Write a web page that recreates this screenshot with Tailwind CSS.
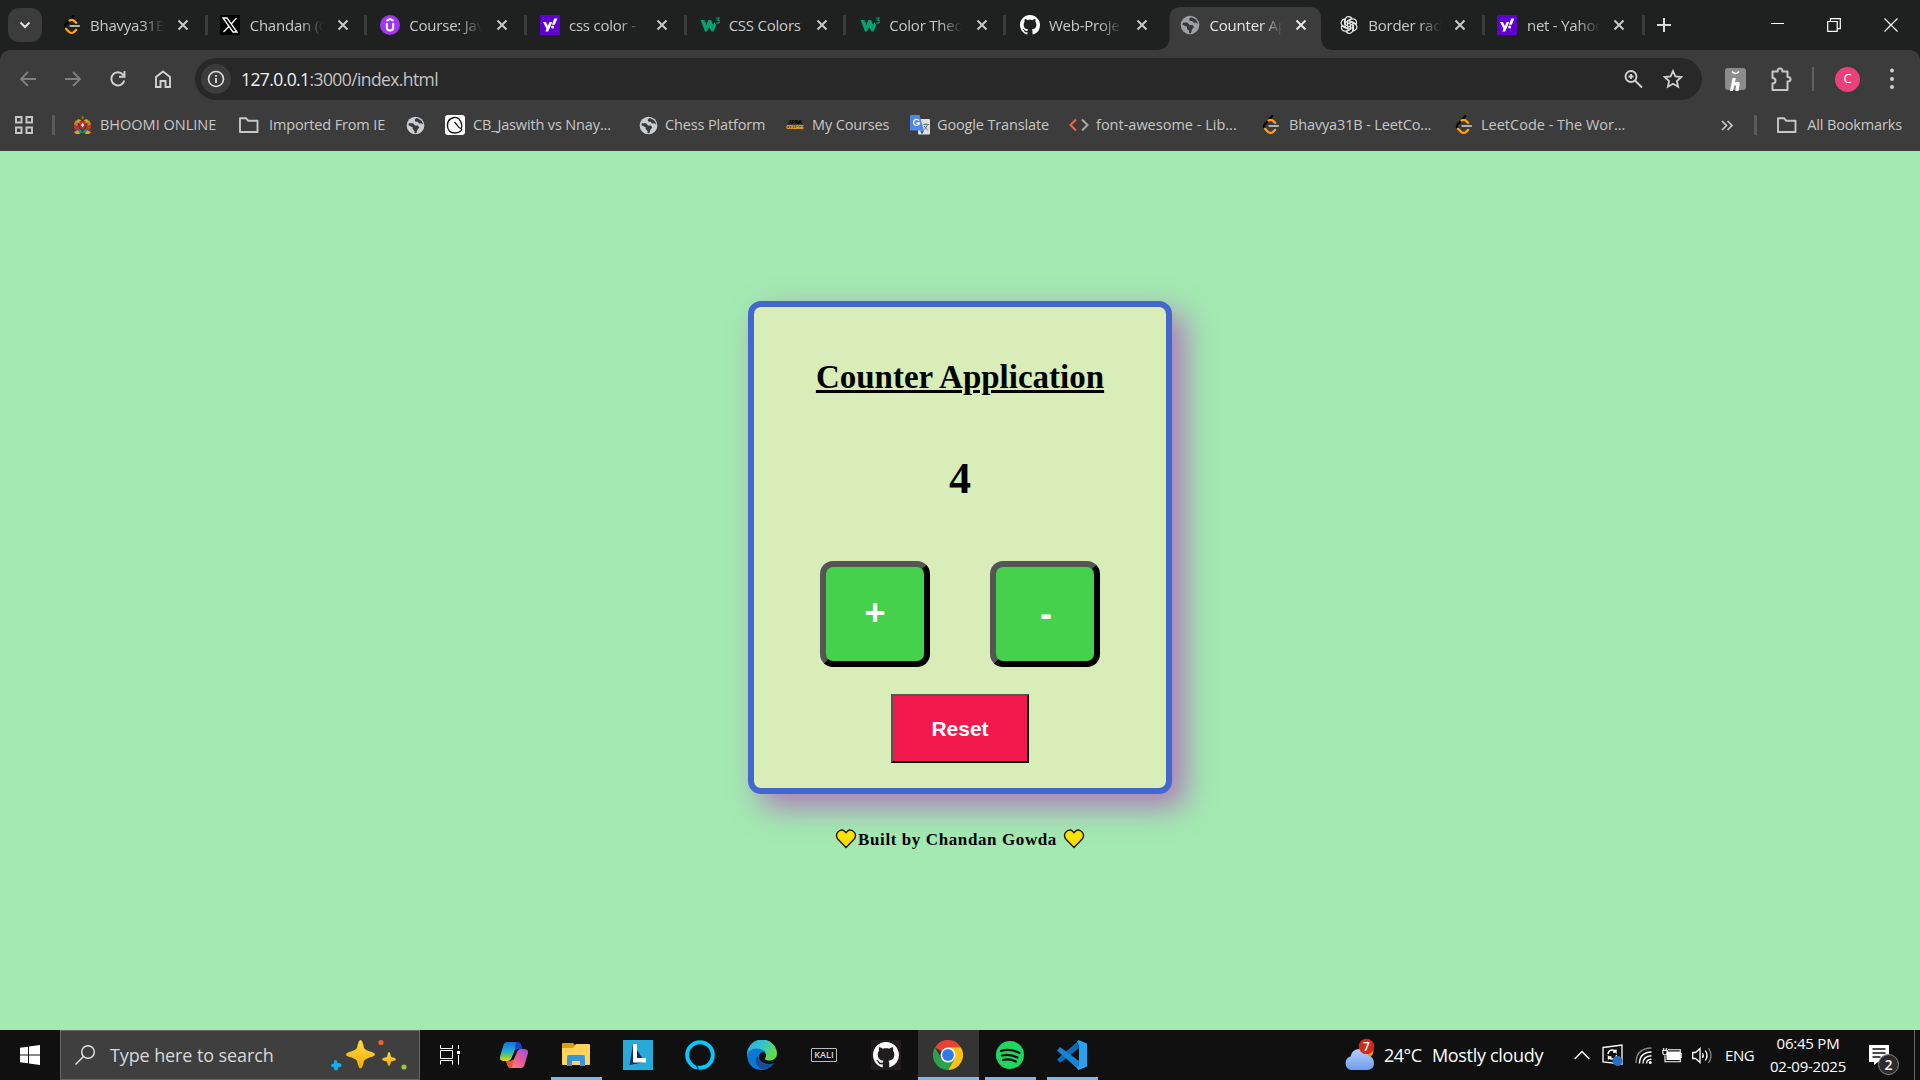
<!DOCTYPE html>
<html lang="en">
<head>
<meta charset="utf-8">
<title>Counter Application</title>
<script src="https://cdn.jsdelivr.net/npm/@tailwindcss/browser@4"></script>
</head>
<body class="w-[1920px] h-[1080px] overflow-hidden flex flex-col bg-[#a3e9b1] font-['Open_Sans','Noto_Sans',sans-serif]">
<svg class="hidden">
  <defs>
    <symbol id="x" viewBox="0 0 12 12"><path d="M1.500 1.500l9 9M10.500 1.500l-9 9" stroke="currentColor" stroke-width="2" fill="none"/></symbol>
    <symbol id="leet" viewBox="0 0 24 24"><path d="M13.500 1.400L4.600 11q-2.200 2.700 0 5" fill="none" stroke="#000" stroke-width="2.700" stroke-linecap="round"/><path d="M9 6.600q2.800-1.600 5.200.2l2.800 2.600M4.800 16.400l4 4.100q2.800 2 5.400 0l2.800-2.700" fill="none" stroke="#ffa116" stroke-width="2.700" stroke-linecap="round"/><path d="M10 13.200h10.500" stroke="#b3b3b3" stroke-width="2.500" stroke-linecap="round"/></symbol>
    <symbol id="yahoo" viewBox="0 0 20 20"><path d="M0 0h20v20H0z" fill="#5f01d1"/><path d="M3 7h3l1.800 4L9.500 7h2.800L8.200 16.500H5.400l1.100-2.700z" fill="#fff"/><path d="M14.200 3.500h3.200l-2.600 6.300H12z" fill="#fff"/><circle cx="12.600" cy="12" r="1.500" fill="#fff"/></symbol>
    <symbol id="w3" viewBox="0 0 20 20"><path d="M.5 5h4l2 5 1.600-5h3l2 5 1-2.500 2.400 2.500-3 6.500h-2L9.200 12 7 16.500H5z" fill="#04a070"/><path d="M16 3h3l-1.500 2q2 0 1.700 1.800t-3 1.200" fill="none" stroke="#04a070" stroke-width="1.100"/></symbol>
    <symbol id="globe" viewBox="0 0 20 20"><circle cx="10" cy="10" r="9.300" fill="currentColor"/><path d="M3 7.500h4.500l2 2.500h3l1.500 2-2 2.500-1 3.500-2 .3v-2.500l-2-2v-2l-4.500-2zM11 2.200l-2 1.800 1 2h2.500l1 2 2.500-.5 1.800 1.800q.2-5-6.800-7.100z" fill="#36383a"/></symbol>
    <symbol id="gh" viewBox="0 0 16 16"><path fill="#fff" d="M8 0C3.580 0 0 3.580 0 8c0 3.540 2.290 6.530 5.470 7.590.4.070.55-.17.55-.38 0-.19-.01-.82-.01-1.490-2.010.37-2.530-.49-2.690-.94-.09-.23-.48-.94-.82-1.130-.28-.15-.68-.52-.01-.53.63-.01 1.080.58 1.230.82.72 1.210 1.870.87 2.330.66.070-.52.28-.87.51-1.070-1.780-.2-3.640-.89-3.640-3.950 0-.87.31-1.590.82-2.150-.08-.2-.36-1.020.08-2.120 0 0 .67-.21 2.200.82.64-.18 1.320-.27 2-.27s1.360.09 2 .27c1.530-1.040 2.200-.82 2.200-.82.44 1.100.16 1.920.08 2.120.51.56.82 1.270.82 2.150 0 3.070-1.870 3.750-3.650 3.950.29.25.54.73.54 1.480 0 1.070-.01 1.930-.01 2.200 0 .21.15.46.55.38A8.010 8.010 0 0016 8c0-4.420-3.580-8-8-8z"/></symbol>
    <symbol id="folder" viewBox="0 0 22 20"><path d="M2 3.200h6l2 2.500h9.500v11.300H2z" fill="none" stroke="#c7c7c7" stroke-width="1.900" stroke-linejoin="round"/></symbol>
    <symbol id="heart" viewBox="0 0 22 20"><path d="M11 18.500L3 10.300Q.2 6.800 2.600 3.400 6-.5 9.600 2.200L11 3.700l1.400-1.500q3.600-2.700 7 1.200 2.400 3.400-.4 6.900z" fill="#ffe000" stroke="#1d1b08" stroke-width="1.400"/></symbol>
  </defs>
</svg>

<!-- tab strip -->
<header class="h-[50px] shrink-0 bg-[#1f2120] flex items-center text-[15px] tracking-[-0.015em] text-[#c8c8c8]">
  <div class="w-12 shrink-0 pl-2"><div class="w-[34px] h-[34px] rounded-[11px] bg-[#3c3c3c] flex items-center justify-center"><svg class="w-3 h-3" viewBox="0 0 12 12"><path d="M1.500 3.500L6 8l4.500-4.500" fill="none" stroke="#e3e3e3" stroke-width="2"/></svg></div></div>
  <div class="w-[159.670px] shrink-0 h-5 flex items-center border-r-[3px] border-[#3c3c3c]"><svg class="ml-3.5 w-5 h-5 shrink-0"><use href="#leet"/></svg><span class="ml-2 w-[74px] overflow-hidden whitespace-nowrap mask-r-from-70%">Bhavya31B</span><svg class="ml-[13px] w-3 h-3 shrink-0"><use href="#x"/></svg></div>
  <div class="w-[159.670px] shrink-0 h-5 flex items-center border-r-[3px] border-[#3c3c3c]"><svg class="ml-3 w-5 h-5 shrink-0" viewBox="0 0 20 20"><path d="M0 0h20v20H0z" fill="#000"/><path d="M3 3h4l10 14h-4zM16.500 3L11 9.200M9 11.200L3.500 17" stroke="#fff" stroke-width="1.300" fill="none"/></svg><span class="ml-[10px] w-[73px] overflow-hidden whitespace-nowrap mask-r-from-70%">Chandan (@</span><svg class="ml-3.5 w-3 h-3 shrink-0"><use href="#x"/></svg></div>
  <div class="w-[159.670px] shrink-0 h-5 flex items-center border-r-[3px] border-[#3c3c3c]"><svg class="ml-[13px] w-5 h-5 shrink-0" viewBox="0 0 20 20"><circle cx="10" cy="10" r="10" fill="#a435f0"/><path d="M6.500 5.800L10 3.800l3.500 2M6.800 8v4.500q0 3 3.200 3t3.200-3V8" stroke="#fff" stroke-width="2" fill="none"/></svg><span class="ml-[9px] w-[73px] overflow-hidden whitespace-nowrap mask-r-from-70%">Course: Jav</span><svg class="ml-3.5 w-3 h-3 shrink-0"><use href="#x"/></svg></div>
  <div class="w-[159.670px] shrink-0 h-5 flex items-center border-r-[3px] border-[#3c3c3c]"><svg class="ml-[13px] w-5 h-5 shrink-0"><use href="#yahoo"/></svg><span class="ml-[9px] w-[73px] overflow-hidden whitespace-nowrap mask-r-from-70%">css color -</span><svg class="ml-3.5 w-3 h-3 shrink-0"><use href="#x"/></svg></div>
  <div class="w-[159.670px] shrink-0 h-5 flex items-center border-r-[3px] border-[#3c3c3c]"><svg class="ml-[13px] w-5 h-5 shrink-0"><use href="#w3"/></svg><span class="ml-[9px] w-[73px] whitespace-nowrap">CSS Colors</span><svg class="ml-3.5 w-3 h-3 shrink-0"><use href="#x"/></svg></div>
  <div class="w-[159.670px] shrink-0 h-5 flex items-center border-r-[3px] border-[#3c3c3c]"><svg class="ml-3.5 w-5 h-5 shrink-0"><use href="#w3"/></svg><span class="ml-[9px] w-[73px] overflow-hidden whitespace-nowrap mask-r-from-70%">Color Theo</span><svg class="ml-3.5 w-3 h-3 shrink-0"><use href="#x"/></svg></div>
  <div class="w-[159.670px] shrink-0 h-5 flex items-center"><svg class="ml-3.5 w-5 h-5 shrink-0"><use href="#gh"/></svg><span class="ml-[9px] w-[73px] overflow-hidden whitespace-nowrap mask-r-from-70%">Web-Proje</span><svg class="ml-3.5 w-3 h-3 shrink-0"><use href="#x"/></svg></div>
  <div class="relative w-[159.670px] shrink-0 h-[50px] pl-[6px] flex items-center text-[#e6e6e6]">
    <svg class="absolute left-[-10px] top-[7px] w-[178px] h-[43px]" viewBox="0 0 178 43"><path d="M0 43Q13.500 43 13.500 30V12Q13.500 0 25.500 0H154Q165 0 165 12V30Q165 43 178 43z" fill="#3c3c3c"/></svg>
    <div class="relative flex items-center"><svg class="ml-2 w-5 h-5 shrink-0 text-[#9aa0a6]"><use href="#globe"/></svg><span class="ml-[10px] w-[73px] overflow-hidden whitespace-nowrap mask-r-from-70%">Counter Ap</span><svg class="ml-3 w-3 h-3 shrink-0"><use href="#x"/></svg></div>
  </div>
  <div class="relative w-[159.670px] shrink-0 h-5 flex items-center border-r-[3px] border-[#3c3c3c]"><svg class="ml-3.5 w-5 h-5 shrink-0" viewBox="0 0 20 20" fill="none" stroke="#e8e8e8" stroke-width="1.200"><g id="petal"><path d="M6.200 12.200V5.200Q6.500 1.500 10 1.700q1.800.2 2.800 1.500L8.500 5.800v5.500"/></g><use href="#petal" transform="rotate(60 10 10)"/><use href="#petal" transform="rotate(120 10 10)"/><use href="#petal" transform="rotate(180 10 10)"/><use href="#petal" transform="rotate(240 10 10)"/><use href="#petal" transform="rotate(300 10 10)"/></svg><span class="ml-[9px] w-[73px] overflow-hidden whitespace-nowrap mask-r-from-70%">Border rad</span><svg class="ml-[13px] w-3 h-3 shrink-0"><use href="#x"/></svg></div>
  <div class="w-[159.670px] shrink-0 h-5 flex items-center border-r-[3px] border-[#3c3c3c]"><svg class="ml-3 w-5 h-5 shrink-0"><use href="#yahoo"/></svg><span class="ml-[10px] w-[73px] overflow-hidden whitespace-nowrap mask-r-from-70%">net - Yahoo</span><svg class="ml-[13px] w-3 h-3 shrink-0"><use href="#x"/></svg></div>
  <svg class="ml-3 w-[14px] h-[14px] shrink-0" viewBox="0 0 14 14"><path d="M7 0v14M0 7h14" stroke="#dcdcdc" stroke-width="2"/></svg>
  <div class="ml-auto flex items-center pr-[22px] gap-[43px]">
    <svg class="w-[13px] h-3" viewBox="0 0 13 12"><path d="M0 4.500h13" stroke="#fff"/></svg>
    <svg class="w-[14px] h-[14px]" viewBox="0 0 14 14"><path d="M.7 3.500h9.500v9.800H.7zM3.500 3V.7h9.800v10h-2.800" stroke="#fff" stroke-width="1.200" fill="none"/></svg>
    <svg class="w-[14px] h-[14px]" viewBox="0 0 14 14"><path d="M.5.5l13 13M13.500.5l-13 13" stroke="#fff" stroke-width="1.200"/></svg>
  </div>
</header>

<!-- toolbar and bookmarks -->
<div class="h-[101px] shrink-0 bg-[#1f2120]">
<div class="h-full bg-[#3c3c3c] rounded-t-[10px]">
  <div class="h-[58px] pt-2 pl-[19px] flex items-start">
    <div class="h-[42px] flex items-center">
      <svg class="w-[18px] h-[18px]" viewBox="0 0 18 18"><path d="M17 9H2M9 2L2 9l7 7" fill="none" stroke="#808080" stroke-width="1.800"/></svg>
      <svg class="ml-[27px] w-[18px] h-[18px]" viewBox="0 0 18 18"><path d="M1 9h15M9 2l7 7-7 7" fill="none" stroke="#808080" stroke-width="1.800"/></svg>
      <svg class="ml-[27px] w-[18px] h-[18px]" viewBox="0 0 18 18"><path d="M15.300 10.500A6.600 6.600 0 1 1 14 4.600L15.500 6.200M15.500 1v5.800H10" fill="none" stroke="#d0d0d0" stroke-width="1.900"/></svg>
      <svg class="ml-[27px] w-[18px] h-[18px]" viewBox="0 0 18 18"><path d="M2 17V7l7-5.500L16 7v10h-4.500v-6h-5v6z" fill="none" stroke="#d0d0d0" stroke-width="1.900"/></svg>
    </div>
    <div class="ml-[23px] w-[1507px] h-[42px] rounded-full bg-[#282828] flex items-center pl-1.5">
      <div class="w-[30px] h-[30px] rounded-full bg-[#3c3c3c] flex items-center justify-center"><svg class="w-[18px] h-[18px]" viewBox="0 0 18 18"><circle cx="9" cy="9" r="7.500" fill="none" stroke="#dedede" stroke-width="1.600"/><path d="M9 8v5M9 5v1.800" stroke="#dedede" stroke-width="1.800"/></svg></div>
      <div class="ml-[10px] text-[17.500px] tracking-[-0.034em] text-[#c4c4c4]"><span class="text-[#f0f0f0]">127.0.0.1</span>:3000/index.html</div>
      <svg class="ml-auto w-[19px] h-[20px]" viewBox="0 0 19 20"><circle cx="7" cy="7.500" r="5.500" fill="none" stroke="#d0d0d0" stroke-width="1.900"/><path d="M11 11.500l7 7M7 5v5M4.500 7.500h5" stroke="#d0d0d0" stroke-width="1.900"/></svg>
      <svg class="ml-[20px] mr-[19px] w-[20px] h-[20px]" viewBox="0 0 20 20"><path d="M10 2l2.400 5.400 5.900.6-4.400 4 1.200 5.800L10 14.800l-5.100 3L6.100 12 1.700 8l5.900-.6z" fill="none" stroke="#d0d0d0" stroke-width="1.800"/></svg>
    </div>
    <div class="h-[42px] flex items-center">
      <svg class="ml-[23px] w-[21px] h-[26px]" viewBox="0 0 21 26"><rect y="2" width="21" height="22" rx="3" fill="#8c8c8c"/><path d="M7 5.500q3.500 4 7 0" fill="none" stroke="#fff" stroke-width="1.300"/><path d="M5 25l2.600-13h3.200l-.9 4.300q5.300-2 4.700 2.200L13.500 25h-3.200l1-5.300q-1.700-1-2.300.5L8 25z" fill="#fff"/></svg>
      <svg class="ml-[24px] w-[22px] h-[26px]" viewBox="0 0 22 26"><path d="M2.500 5.500h5.200q-.5-3 2.300-3t2.300 3h5.200v5.500q3 0 3 2.300t-3 2.300v8.400H2.500v-6.500q3 0 3-2.800t-3-2.800z" fill="none" stroke="#c8c8c8" stroke-width="2" stroke-linejoin="round"/></svg>
      <div class="ml-5 w-0.5 h-6 bg-[#606060]"></div>
      <div class="ml-[21px] w-[25px] h-[25px] rounded-full bg-[#ec407a] text-white text-[13px] flex items-center justify-center">C</div>
      <svg class="ml-[30px] w-1 h-[22px]" viewBox="0 0 4 22" fill="#d0d0d0"><circle cx="2" cy="2.500" r="2"/><circle cx="2" cy="11" r="2"/><circle cx="2" cy="19" r="2"/></svg>
    </div>
  </div>
  <div class="h-[34px] flex items-center text-[14.500px] tracking-[-0.010em] text-[#c7c7c7] whitespace-nowrap">
    <svg class="ml-[15px] w-[18px] h-[18px] shrink-0" viewBox="0 0 18 18"><path d="M1 1h5.500v5.500H1zM11.500 1H17v5.500h-5.500zM1 11.500h5.500V17H1zM11.500 11.500H17V17h-5.500z" fill="none" stroke="#c7c7c7" stroke-width="1.900"/></svg>
    <div class="ml-[19px] w-[3px] h-5 bg-[#5a5a5a]"></div>
    <div class="ml-[18px] w-[165px] shrink-0 flex items-center"><svg class="w-[19px] h-5 mr-2" viewBox="0 0 19 20"><path d="M9.500 0l1.500 3-1.500 1.500L8 3z" fill="#9a6a30"/><path d="M5 4l3 1v4L3 7zM14 4l-3 1v4l5-2z" fill="#e0a125"/><path d="M1 8l4 1 1 5-3 1-2-2zM18 8l-4 1-1 5 3 1 2-2z" fill="#c9322a"/><path d="M3 5l2 2-1 4-3-2zM16 5l-2 2 1 4 3-2z" fill="#c08a28"/><path d="M6.500 6h6v6l-3 3-3-3z" fill="#d5202c"/><path d="M9.500 7.500L11 10l-1.500 2.500L8 10z" fill="#fff"/><path d="M5 13l3 2 1.500 3 1.500-3 3-2-1 5H6z" fill="#1b8f84"/><path d="M1 17l4-2 2 4H3zM18 17l-4-2-2 4h4z" fill="#eda21c"/></svg><span class="tracking-normal">BHOOMI ONLINE</span></div>
    <div class="w-[168px] shrink-0 flex items-center"><svg class="w-[22px] h-5 mr-[9px]"><use href="#folder"/></svg><span>Imported From IE</span></div>
    <svg class="w-[19px] h-[19px] shrink-0 text-[#c9ccd1]"><use href="#globe"/></svg>
    <div class="ml-5 w-[194px] shrink-0 flex items-center"><svg class="w-5 h-5 mr-2" viewBox="0 0 20 20"><rect width="20" height="20" rx="3" fill="#fff"/><path d="M9 2.500Q2 4 2.500 11T10 18q5.500-.5 7-4M9 2.500q5.500-1 7.500 6.500.8 3-.5 4.500-2 0-3.500-3L9.500 7" fill="none" stroke="#111" stroke-width="1.300"/></svg><span>CB_Jaswith vs Nnay...</span></div>
    <div class="w-[146px] shrink-0 flex items-center"><svg class="w-[19px] h-[19px] mr-[7px] text-[#c9ccd1]"><use href="#globe"/></svg><span>Chess Platform</span></div>
    <div class="w-[125px] shrink-0 flex items-center"><svg class="w-[19px] h-5 mr-2" viewBox="0 0 19 20"><text x="3.500" y="9" font-size="5" font-weight="800" letter-spacing="-.4" fill="#080808">APNA</text><text x="1" y="13.500" font-size="5" font-weight="800" letter-spacing="-.8" fill="#f3a31c">COLLEGE</text></svg><span>My Courses</span></div>
    <div class="w-[159px] shrink-0 flex items-center"><svg class="w-5 h-5 mr-[7px]" viewBox="0 0 20 20"><rect x="8" y="4" width="12" height="15.500" rx="1" fill="#e0e0e0"/><path d="M10 15.500h4l-2 4z" fill="#2b53b5"/><path d="M1 0h8.500l4.500 15.500H1Q0 15.500 0 14.500V1Q0 0 1 0z" fill="#4f87ed"/><path d="M9 5.700A3 3 0 1 0 9.500 8H6.500" fill="none" stroke="#fff" stroke-width="1.300"/><path d="M13 9.500h6M16 8v1.500M17.500 9.500q-1 4-4 5.500M14 11l4 4.500" fill="none" stroke="#6b7b85" stroke-width="1"/></svg><span>Google Translate</span></div>
    <div class="w-[192px] shrink-0 flex items-center"><svg class="w-5 h-5 mr-[7px]" viewBox="0 0 20 20" fill="none" stroke-width="2"><path d="M7 4.500L1.500 10 7 15.500" stroke="#f2683c"/><path d="M13 4.500l5.500 5.500-5.500 5.500" stroke="#a8a8a8"/></svg><span class="tracking-normal">font-awesome - Lib...</span></div>
    <div class="w-[193px] shrink-0 flex items-center"><svg class="w-5 h-5 mr-[8px]"><use href="#leet"/></svg><span>Bhavya31B - LeetCo...</span></div>
    <div class="shrink-0 flex items-center"><svg class="w-5 h-5 mr-[7px]"><use href="#leet"/></svg><span class="tracking-normal">LeetCode - The Wor...</span></div>
    <svg class="ml-auto w-3 h-[11px]" viewBox="0 0 12 11"><path d="M1 1l4.500 4.500L1 10M6.500 1L11 5.500 6.500 10" fill="none" stroke="#c7c7c7" stroke-width="1.700"/></svg>
    <div class="ml-[21px] w-[3px] h-5 bg-[#5a5a5a]"></div>
    <svg class="ml-[19px] w-[22px] h-5"><use href="#folder"/></svg><span class="ml-[9px] mr-[18px]">All Bookmarks</span>
  </div>
</div>
</div>

<!-- counter page -->
<main class="h-[879px] shrink-0 flex flex-col items-center pt-[150px] font-['Liberation_Serif',serif] font-bold text-black">
  <section class="w-[424px] h-[493px] shrink-0 border-6 border-[#4466cf] rounded-[13px] bg-[#d9edb9] shadow-[12.500px_12.500px_30px_#b07abb] flex flex-col items-center">
    <h1 class="mt-[51px] text-[33px] leading-[38px] underline">Counter Application</h1>
    <div class="mt-[57px] text-[44px] leading-[52px]">4</div>
    <div class="mt-[56px] flex gap-[60px] font-['Liberation_Sans',sans-serif] text-[36px] text-white">
      <button class="w-[110px] h-[106px] pb-[2px] border-6 rounded-[13px] bg-[#45d14c] border-t-[#555] border-l-[#555] border-r-black border-b-black leading-none">+</button>
      <button class="w-[110px] h-[106px] pl-[2px] border-6 rounded-[13px] bg-[#45d14c] border-t-[#555] border-l-[#555] border-r-black border-b-black leading-none">-</button>
    </div>
    <button class="mt-[27px] w-[138px] h-[69px] border-2 bg-[#f4194c] border-t-[#555] border-l-[#555] border-r-black border-b-black font-['Liberation_Sans',sans-serif] text-[21px] text-white">Reset</button>
  </section>
  <footer class="mt-[33px] flex items-center text-[17px] tracking-[0.600px] leading-6"><svg class="w-[22px] h-5 mr-[1px] mb-[2px]"><use href="#heart"/></svg><span class="pt-px">Built by Chandan Gowda</span><svg class="ml-[6px] mb-[2px] w-[22px] h-5"><use href="#heart"/></svg></footer>
</main>

<!-- taskbar -->
<footer class="h-[50px] shrink-0 bg-[#101010] flex items-center text-white whitespace-nowrap">
  <svg class="ml-5 w-5 h-5 shrink-0" viewBox="0 0 20 20" fill="#fff"><path d="M0 2.800l8-1.100v7.800H0zM9 1.500L20 0v9.500H9zM0 10.500h8v7.800l-8-1.100zM9 10.500h11V20L9 18.500z"/></svg>
  <div class="ml-5 w-[360px] h-[50px] shrink-0 border border-[#666] bg-[#3f3f3f] flex items-center pl-3.5">
    <svg class="w-5 h-5" viewBox="0 0 20 20"><circle cx="13" cy="7" r="6.300" fill="none" stroke="#e8e8e8" stroke-width="1.400"/><path d="M8.500 11.500L.5 19.500" stroke="#e8e8e8" stroke-width="1.400"/></svg>
    <span class="ml-[15px] w-[221px] text-[18px] tracking-[-0.006em] text-[#d8d8d8]">Type here to search</span>
    <svg class="w-[78px] h-[34px]" viewBox="0 0 78 34"><defs><linearGradient id="gold" x1="0" y1="0" x2="0" y2="1"><stop offset="0" stop-color="#ffdc3c"/><stop offset="1" stop-color="#f5a80f"/></linearGradient></defs><path d="M29.500 2q2 0 3.500 8 1 2 9 4.500 4 2 0 4-8 2-9 4.500-1.500 7.500-3.500 7.500T26 23q-1-2.500-9-4.500-4-2 0-4 8-2.500 9-4.500 1.500-8 3.500-8z" fill="url(#gold)"/><path d="M58 14q1 0 2 5 5 1 5 2.300T60 23.500q-1 4.500-2 4.500t-2-4.500q-5-1-5-2.200T56 19q1-5 2-5z" fill="url(#gold)"/><path d="M4 22q2 0 2.500 3 4 0 4 2T7 29.500q0 3-2 3T3 29.500q-3-.5-3-2T3 25.500Q3 22 4 22z" fill="#14aef0"/><circle cx="50" cy="4.500" r="2.600" fill="#f0622a"/><circle cx="73" cy="29" r="2.600" fill="#8ccb3e"/></svg>
  </div>
  <svg class="ml-5 w-5 h-5 shrink-0" viewBox="0 0 20 20" fill="none" stroke="#fff" stroke-width="1"><path d="M.5 0v3.500h12V0M.5 5.500h12v8H.5zM.5 19.500v-4h12v4M18.500 0v4M18.500 10v9.500"/><path d="M17 6h3v3h-3z" fill="#fff" stroke="none"/></svg>
  <svg class="ml-10 w-7 h-[26px] shrink-0" viewBox="0 0 28 26"><defs><linearGradient id="ca" x1="0" y1="0" x2="0" y2="1"><stop offset="0" stop-color="#1470e0"/><stop offset=".5" stop-color="#1fb0d5"/><stop offset=".75" stop-color="#7cc84a"/><stop offset="1" stop-color="#ffd21f"/></linearGradient><linearGradient id="cb" x1="1" y1="0" x2="0" y2="1"><stop offset="0" stop-color="#9b4de0"/><stop offset=".5" stop-color="#ea5a9a"/><stop offset="1" stop-color="#ff9a50"/></linearGradient></defs><path d="M7 0h10q3 0 4 3l1 4h-4q-3 0-4 3l-2.500 6q-1 3-4 3H4q-5 0-3.800-5L3.500 3Q4.500 0 7 0z" fill="url(#ca)"/><path d="M16 0h1q3 0 4 3l1 4h-4q-2 0-3.500 2.500z" fill="#1a3fc4"/><path d="M21 26H11q-3 0-4-4l-.7-3h4.200q3 0 4-3l2.500-6q1-3 4-3h3q5 0 3.800 5l-3.300 11q-1 3-3.500 3z" fill="url(#cb)"/><path d="M12 26h-1q-3 0-4-4l-.7-3h4.200q2 0 3-2z" fill="#f0503a"/></svg>
  <div class="ml-[23px] w-[51px] h-[50px] shrink-0 border-b-3 border-[#76b9ed] flex items-center justify-center"><svg class="mt-[3px] mr-[2px] w-7 h-6" viewBox="0 0 28 24"><path d="M0 1q0-1 1-1h10l3 3-2 3H0z" fill="#e09c0a"/><path d="M0 5h11l3-4h13q1 0 1 1v19q0 1-1 1H1q-1 0-1-1z" fill="#ffd35c"/><path d="M5 23V14q0-2 2-2h14q2 0 2 2v9h-5v-5h-8v5z" fill="#3a94dc"/></svg></div>
  <svg class="ml-[21px] w-[30px] h-[30px] shrink-0" viewBox="0 0 30 30"><path d="M0 0h30v30H0z" fill="#28aad8"/><path d="M10 4L6.500 25 22 22z" fill="#0b2a6c"/><path d="M10 4h4v14h9v4.500H10z" fill="#fff"/></svg>
  <svg class="ml-8 w-[30px] h-[30px] shrink-0" viewBox="0 0 30 30"><circle cx="15" cy="15" r="12.800" fill="none" stroke="#05c8ff" stroke-width="4"/><path d="M9 23.500Q13.200 25.500 13 30.500" fill="none" stroke="#101010" stroke-width="1.200"/><path d="M13.800 29.500Q15 26.500 19 24.500L20 27z" fill="#05c8ff"/></svg>
  <svg class="ml-8 w-[30px] h-[30px] shrink-0" viewBox="0 0 30 30"><defs><linearGradient id="eg" x1="0" y1="0" x2="1" y2=".5"><stop offset="0" stop-color="#2aa9e8"/><stop offset=".5" stop-color="#35c1d0"/><stop offset="1" stop-color="#63dd45"/></linearGradient></defs><path d="M0 16A15 15 0 0 1 30 13q0 7-7 7.500-5 0-5-2 1.500-2 1-4-1-4-6-5-7 0-13 6.500z" fill="url(#eg)"/><path d="M0 15Q2 9 9 8.500q7 0 9.500 4-6.500-1-6.500 5 1 10 12 8-4 4.500-9 4.500Q1 29.500 0 15z" fill="#0a78d4"/><path d="M11 15q-4 5-1 10 3 5 8 4.600 6-1.500 9.700-6.600-2 1-6 1Q12 23 11 15z" fill="#154f9c"/></svg>
  <div class="ml-[34px] w-[26px] h-[14px] shrink-0 border border-[#bbb] rounded-[1px] text-[9px] leading-[11px] text-center font-semibold text-[#ddd]">KALI</div>
  <div class="ml-[34px] w-[30px] h-[30px] shrink-0 bg-[#211d1f] flex items-center justify-center"><svg class="w-[26px] h-[26px]"><use href="#gh"/></svg></div>
  <div class="ml-[17px] w-[61px] h-[50px] shrink-0 border-b-3 border-[#76b9ed] bg-[#343434] flex items-center justify-center"><svg class="mt-[3px] mr-px w-[30px] h-[30px]" viewBox="0 0 30 30"><path d="M15 15L2 7.500a15 15 0 0 1 26 0z" fill="#ea4335"/><path d="M15 7.500h13A15 15 0 0 1 15 30l6.500-11.200z" fill="#fbc116"/><path d="M8.500 18.800L2 7.500A15 15 0 0 0 15 30l6.500-11.200z" fill="#2da14b"/><circle cx="15" cy="15" r="7.500" fill="#fff"/><circle cx="15" cy="15" r="5.900" fill="#3079ea"/></svg></div>
  <div class="ml-1.5 w-[51px] h-[50px] shrink-0 border-b-3 border-[#76b9ed] flex items-center justify-center"><svg class="mt-[3px] -ml-0.5 w-7 h-7" viewBox="0 0 28 28"><circle cx="14" cy="14" r="14" fill="#1ed760"/><path d="M5 10q9-3 18.500 2M6 14.500q8-2 15.500 2M7 19q6.500-2 13 1.500" fill="none" stroke="#101010" stroke-width="2.200" stroke-linecap="round"/></svg></div>
  <div class="ml-[11px] w-[51px] h-[50px] shrink-0 border-b-3 border-[#76b9ed] flex items-center justify-center"><svg class="mt-[3px] mr-px w-[30px] h-[30px]" viewBox="0 0 30 30"><path d="M0 19.500L20 2l2 6L3 23z" fill="#0b6cb8"/><path d="M0 10.500L3 7l19 14-1 8z" fill="#1287d6"/><path d="M21.500 0L30 3.500v23L21.500 30 20 28.500l2-4V6l-2-4.500z" fill="#27a3f3"/></svg></div>

  <div class="ml-auto flex items-center shrink-0">
    <svg class="w-[31px] h-[34px] mr-[9px]" viewBox="0 0 31 34"><defs><linearGradient id="cl" x1="0" y1="0" x2="0" y2="1"><stop offset="0" stop-color="#b5d0f8"/><stop offset="1" stop-color="#6f9df0"/></linearGradient></defs><circle cx="22" cy="13" r="7.500" fill="#f08a1c"/><path d="M7 32a7 7 0 0 1-.5-13.500Q8 11 15.500 11t9 7Q30 19 30 25t-6 7z" fill="url(#cl)"/><circle cx="22.500" cy="8.500" r="7.800" fill="#cc2c1e"/><text x="22.500" y="13" font-size="12" font-weight="600" text-anchor="middle" fill="#fff">7</text></svg>
    <span class="w-12 text-[18px] tracking-[-0.030em]">24°C</span><span class="w-[142px] text-[18px] tracking-[-0.018em]">Mostly cloudy</span>
    <svg class="w-4 h-2.5" viewBox="0 0 16 10"><path d="M.7 9L8 1.500 15.300 9" fill="none" stroke="#fff" stroke-width="1.400"/></svg>
    <svg class="ml-3 w-[21px] h-[22px]" viewBox="0 0 21 22"><path d="M1 3.500L20 1v19L1 18z" fill="none" stroke="#fff" stroke-width="1.300"/><path d="M6 10q.5-4 4.500-4 2 0 3.500 2V5.500M14 8h-3M14.500 11q-.5 4-4.500 4-2 0-3.500-2v2.500M6.500 13h3" fill="none" stroke="#fff" stroke-width="1.400"/><circle cx="15.500" cy="17" r="5" fill="#2a70c2"/></svg>
    <svg class="ml-3 w-[17px] h-[17px]" viewBox="0 0 17 17" fill="none" stroke-width="1.400"><path d="M1 16Q1 1.500 16.500 1" stroke="#888"/><path d="M4.500 16.500Q4.500 5.500 16.500 5M8 16.500Q8 9 16.500 8.700" stroke="#fff"/><path d="M11.500 16.500q0-4 5-4.200" stroke="#fff"/><circle cx="15.200" cy="15.500" r="1.500" fill="#fff"/></svg>
    <svg class="ml-[10px] w-5 h-4" viewBox="0 0 20 16"><path d="M4.500 4.500H18V13H4.500z" fill="#fff"/><path d="M6 2.700h12.300v12H3V9M18.500 6.500h1.300v4h-1.300M.8 3.500h4.400v2.300Q5 8 3 8T.8 5.800zM1.700 1v2.500M4.300 1v2.500" fill="none" stroke="#fff" stroke-width="1.100"/></svg>
    <svg class="ml-[10px] w-[21px] h-[19px]" viewBox="0 0 21 19" fill="none" stroke-width="1.300"><path d="M.7 6.500h2.800L8 2.500v14l-4.500-4H.7z" stroke="#fff"/><path d="M10.500 7q1.500 2.500 0 5M13.300 4.500q3.500 5 0 10" stroke="#fff"/><path d="M16.500 2q5 7.500 0 15" stroke="#888"/></svg>
    <span class="ml-[12px] w-[45px] text-[15px] tracking-[-0.030em]">ENG</span>
    <div class="w-[76px] text-[15px] leading-[23px] tracking-[-0.015em] flex flex-col items-center"><span>06:45 PM</span><span>02-09-2025</span></div>
    <div class="relative ml-[23px] w-[45px] h-[20px]"><svg class="w-5 h-5" viewBox="0 0 20 20"><path d="M0 0h20v17H9l-4 3v-3H0z" fill="#fff"/><path d="M3.500 4h13M3.500 8h13M3.500 12h8" stroke="#101010" stroke-width="1.300"/></svg><div class="absolute left-[9px] top-[9px] w-[21px] h-[21px] rounded-full border border-[#888] bg-[#2c2c2c] text-[14px] font-semibold leading-[19px] text-center">2</div></div>
    <div class="w-px h-[50px] bg-[#666] mr-[5px]"></div>
  </div>
</footer>
</body>
</html>
